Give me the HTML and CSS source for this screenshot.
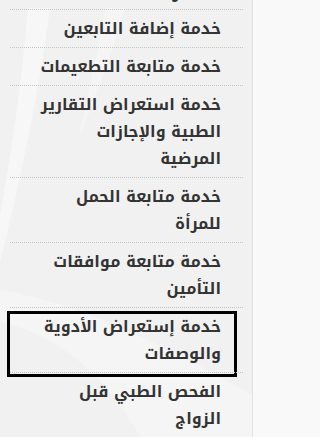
FILE: index.html
```html
<!DOCTYPE html>
<html lang="ar" dir="rtl">
<head>
<meta charset="utf-8">
<title>الخدمات</title>
<link rel="stylesheet" href="styles.css">
</head>
<body>
<div class="page">
  <div class="panel">
    <svg class="watermark" width="252" height="437" viewBox="0 0 252 437" aria-hidden="true">
      <path d="M28 8 L 50 8 C 38 100, 18 190, 0 262 L 0 215 C 12 150, 22 80, 28 8 Z" fill="#f7f7f7"/>
      <path d="M105 8 L 125 8 C 110 60, 95 100, 78 140 C 88 95, 98 55, 105 8 Z" fill="#f5f5f5"/>
      <path d="M0 290 C 60 300, 140 330, 252 395 L 252 437 L 140 437 C 110 380, 60 335, 0 322 Z" fill="#f5f5f5"/>
    </svg>
    <ul class="menu">
      <li class="item prev"><a class="link" href="#">الصادر</a></li>
      <li class="item"><a class="link" href="#">خدمة إضافة التابعين</a></li>
      <li class="item"><a class="link" href="#">خدمة متابعة التطعيمات</a></li>
      <li class="item"><a class="link" href="#">خدمة استعراض التقارير الطبية والإجازات المرضية</a></li>
      <li class="item"><a class="link" href="#">خدمة متابعة الحمل للمرأة</a></li>
      <li class="item"><a class="link" href="#">خدمة متابعة موافقات التأمين</a></li>
      <li class="item focused"><a class="link" href="#">خدمة إستعراض الأدوية والوصفات</a></li>
      <li class="item"><a class="link" href="#">الفحص الطبي قبل الزواج</a></li>
    </ul>
  </div>
  <div class="edge"></div>
</div>
</body>
</html>
```

FILE: styles.css
```css
html, body {
  margin: 0;
  padding: 0;
  height: 100%;
  overflow: hidden;
}

body {
  background: #f1f1f1;
  font-family: "Noto Kufi Arabic", "DejaVu Sans", sans-serif;
}

.page {
  display: flex;
  flex-direction: row-reverse;
  height: 437px;
}

.panel {
  position: relative;
  width: 252px;
  height: 437px;
  background: #f1f1f1;
  overflow: hidden;
}

.watermark {
  position: absolute;
  top: 0;
  left: 0;
  z-index: 0;
}

.edge {
  flex: 1;
  border-left: 1px solid #e2e2e2;
  background: #f9f9f9;
}

.menu {
  position: relative;
  z-index: 1;
  list-style: none;
  margin: 0 9px 0 10px;
  padding: 0;
  direction: rtl;
}

.item {
  position: relative;
  border-top: 1px dotted #c4c4c4;
  padding: 5px 22px 5px 30px;
}

.item.prev {
  border-top: none;
  margin-top: -26.2px;
  padding-bottom: 3.5px;
}

.link {
  display: block;
  color: #333333;
  text-decoration: none;
  font-weight: bold;
  font-size: 16px;
  line-height: 27px;
}

.focused::after {
  content: "";
  position: absolute;
  top: 3px;
  left: -3px;
  width: 224px;
  height: 60px;
  border: 3px solid #000;
  pointer-events: none;
}
```
